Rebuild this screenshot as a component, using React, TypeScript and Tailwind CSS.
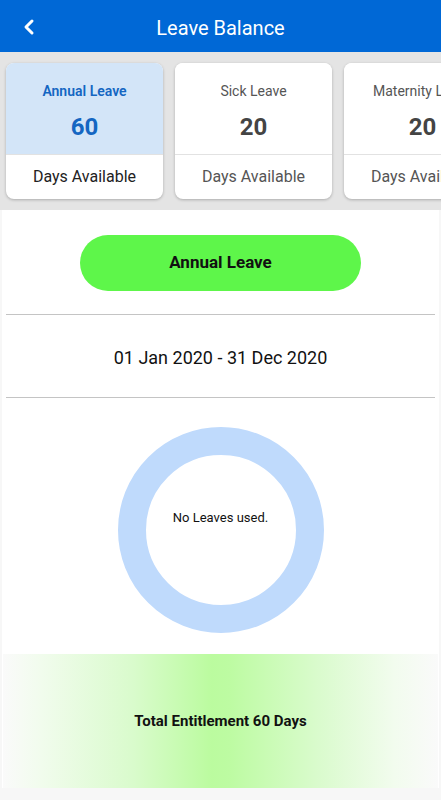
import { ChevronLeft } from 'lucide-react';

const cards = [
  { title: 'Annual Leave', days: 60, active: true },
  { title: 'Sick Leave', days: 20, active: false },
  { title: 'Maternity Leave', days: 20, active: false },
];

const LeaveCard = ({ title, days, active }: { title: string; days: number; active: boolean }) => {
  return (
    <div className="w-[157px] h-[136px] shrink-0 rounded-lg overflow-hidden bg-white shadow-[0_1px_3px_rgba(0,0,0,0.25)] flex flex-col">
      <div
        className={
          active
            ? 'h-[92px] bg-[#d3e5f8] flex flex-col items-center pt-[18px] border-b border-[#e2e2e2]'
            : 'h-[92px] bg-white flex flex-col items-center pt-[18px] border-b border-[#e2e2e2]'
        }
      >
        <span
          className={
            active
              ? 'text-[14px] font-semibold text-[#1466c2] whitespace-nowrap'
              : 'text-[14px] text-[#555] whitespace-nowrap'
          }
        >
          {title}
        </span>
        <span
          className={
            active
              ? 'mt-[11px] text-[24px] leading-[28px] font-bold text-[#1466c2]'
              : 'mt-[11px] text-[24px] leading-[28px] font-bold text-[#444]'
          }
        >
          {days}
        </span>
      </div>
      <div className="flex-1 flex items-center justify-center">
        <span className={active ? 'text-[16px] text-[#222] whitespace-nowrap' : 'text-[16px] text-[#555] whitespace-nowrap'}>
          Days Available
        </span>
      </div>
    </div>
  );
};

const App = () => {
  return (
    <div className="w-[441px] h-[800px] overflow-hidden bg-[#f7f7f7] font-['Roboto',sans-serif]">
      <header className="h-[52px] bg-[#0068d6] flex items-center relative">
        <ChevronLeft className="absolute left-[17px] top-[15px] text-white" size={24} strokeWidth={3} />
        <h1 className="w-full pt-[3px] text-center text-white text-[20px]">Leave Balance</h1>
      </header>

      <div className="bg-[#e4e4e4] h-[158px] pt-[11px] pl-[6px] flex gap-[12px] overflow-hidden">
        {cards.map((c) => (
          <LeaveCard key={c.title} {...c} />
        ))}
      </div>

      <main className="bg-white mx-[2px] flex flex-col items-center">
        <button className="mt-[25px] w-[281px] h-[56px] rounded-full bg-[#5ef64a] text-[17px] font-bold text-[#111]">
          Annual Leave
        </button>
        <div className="mt-[23px] w-[429px] border-t border-[#c4c4c4]" />
        <div className="h-[82px] pt-[2px] flex items-center text-[18px] text-[#111]">01 Jan 2020 - 31 Dec 2020</div>
        <div className="w-[429px] border-t border-[#c4c4c4]" />

        <div className="mt-[29px] w-[206px] h-[206px] rounded-full border-[28px] border-[#bfdafc] flex justify-center">
          <span className="mt-[53px] text-[13px] text-[#111]">No Leaves used.</span>
        </div>

        <div className="mt-[21px] w-[435px] h-[134px] flex items-center justify-center bg-[linear-gradient(to_right,#fafafa_0%,#f2fcee_8%,#d9fbcc_30%,#bbfb9f_48%,#bdfba2_52%,#d9fbcc_72%,#f2fcee_90%,#fafafa_100%)]">
          <span className="text-[15px] font-bold text-[#111]">Total Entitlement 60 Days</span>
        </div>
      </main>
    </div>
  );
};

export default App;
